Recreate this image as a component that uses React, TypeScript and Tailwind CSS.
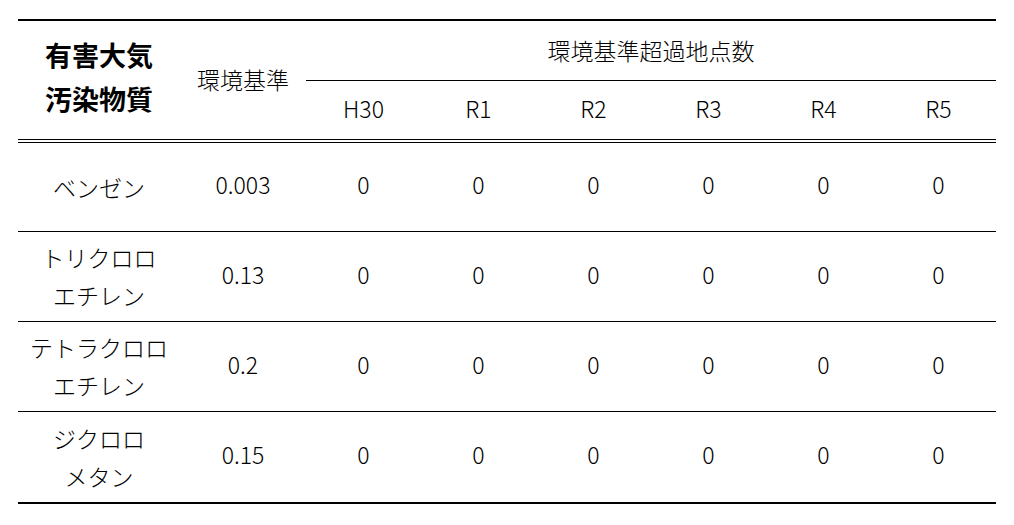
import React from "react";

const years = ["H30", "R1", "R2", "R3", "R4", "R5"];

const rows: { name: string[]; std: string }[] = [
  { name: ["ベンゼン"], std: "0.003" },
  { name: ["トリクロロ", "エチレン"], std: "0.13" },
  { name: ["テトラクロロ", "エチレン"], std: "0.2" },
  { name: ["ジクロロ", "メタン"], std: "0.15" },
];

export default function App() {
  return (
    <div
      className="w-[1014px] h-[525px] bg-white text-black pt-[19px] pl-[18px]"
      style={{ fontFamily: '"Noto Sans CJK JP", "Noto Sans", sans-serif' }}
    >
      <div className="w-[978px] border-t-2 border-black border-b-2 grid grid-cols-[162px_126px_repeat(6,115px)] text-[23px] font-light">
        {/* Header */}
        <div className="row-span-2 flex flex-col items-center justify-center font-bold text-[27px] leading-[44px] border-b-4 border-double border-black pb-[7px]">
          <span>有害大気</span>
          <span>汚染物質</span>
        </div>
        <div className="row-span-2 flex items-center justify-center border-b-4 border-double border-black pb-[1px]">
          <span className="leading-none">環境基準</span>
        </div>
        <div className="col-span-6 h-[60px] flex items-center justify-center border-b border-black pb-[1px]">
          <span className="leading-none">環境基準超過地点数</span>
        </div>
        {years.map((y) => (
          <div
            key={y}
            className="h-[62px] flex items-center justify-center border-b-4 border-double border-black pb-[4px]"
          >
            <span className="leading-none">{y}</span>
          </div>
        ))}

        {/* Body */}
        {rows.map((r, i) => {
          const last = i === rows.length - 1;
          const border = last ? "" : "border-b border-black";
          const h = i === 0 ? "h-[89px]" : "h-[90px]";
          return (
            <React.Fragment key={i}>
              <div className={`${h} ${border} flex flex-col items-center justify-center leading-[38px] pb-[1px]`}>
                {r.name.map((n) => (
                  <span key={n}>{n}</span>
                ))}
              </div>
              <div className={`${h} ${border} flex items-center justify-center pb-[5px]`}>
                <span className="leading-none">{r.std}</span>
              </div>
              {years.map((y) => (
                <div key={y} className={`${h} ${border} flex items-center justify-center pb-[5px]`}>
                  <span className="leading-none">0</span>
                </div>
              ))}
            </React.Fragment>
          );
        })}
      </div>
    </div>
  );
}
